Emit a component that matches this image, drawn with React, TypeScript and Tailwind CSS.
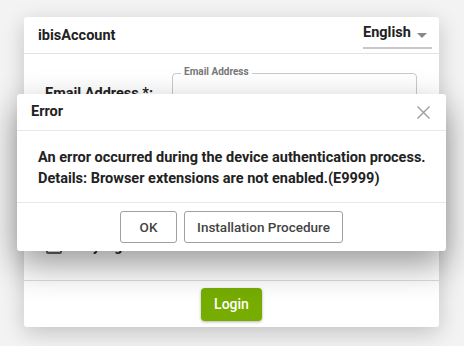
import React from "react";

export default function App() {
  return (
    <div
      className="relative w-[464px] h-[346px] overflow-hidden bg-[#f3f3f3] pt-[17px] pl-[24px]"
      style={{ fontFamily: "Roboto, 'Liberation Sans', sans-serif" }}
    >
      <div className="w-[415px] h-[310px] bg-white rounded-[3px] shadow-[0_6px_22px_rgba(0,0,0,0.2)] flex flex-col">
        <div className="h-[37px] border-b border-[#e3e3e3] flex items-center justify-between pl-[14px] pr-[7px] shrink-0">
          <div className="text-[14.5px] font-bold text-[#222] leading-none pt-[3px]">ibisAccount</div>
          <div className="self-end mb-[4px] h-[29px] w-[69px] border-b-2 border-[#c8c8c8] flex items-center justify-between">
            <span className="text-[14.5px] font-bold text-[#222] leading-none">English</span>
            <span className="w-0 h-0 border-l-[5px] border-r-[5px] border-t-[5px] border-l-transparent border-r-transparent border-t-[#888] mr-[5px] mt-[3px]"></span>
          </div>
        </div>
        <div className="flex-1 flex flex-col pl-[21px] pr-[22px] pt-[19px]">
          <div className="flex items-start">
            <div className="w-[127px] pt-[14px] text-[14.5px] font-bold text-[#222] leading-none">Email Address *:</div>
            <div className="relative flex-1 h-[40px] border border-[#c9c9c9] rounded-[4px]">
              <span className="absolute left-[8px] top-[-7px] bg-white px-[3px] text-[10px] font-bold text-[#777] leading-none">
                Email Address
              </span>
            </div>
          </div>
          <div className="flex items-start mt-[16px]">
            <div className="w-[127px]"></div>
            <div className="relative flex-1 h-[40px] border border-[#c9c9c9] rounded-[4px]"></div>
          </div>
          <div className="flex items-center mt-[69px] ml-[1px]">
            <div className="w-[16px] h-[16px] border-2 border-[#666] rounded-[2px]"></div>
            <span className="ml-[10px] text-[14px] font-bold text-[#222] leading-none">Stay signed in</span>
          </div>
        </div>
        <div className="h-[47px] border-t border-[#dcdcdc] flex items-center justify-center shrink-0">
          <button className="w-[61px] h-[33px] rounded-[4px] bg-[#76ad00] text-white text-[14px] font-medium shadow-[0_1px_3px_rgba(0,0,0,0.3)]">
            Login
          </button>
        </div>
      </div>

      <div className="absolute left-[17px] top-[94px] w-[429px] h-[157px] bg-white rounded-[3px] shadow-[0_14px_34px_rgba(0,0,0,0.4)] flex flex-col">
        <div className="h-[37px] border-b border-[#e8e8e8] flex items-center justify-between pl-[14px] pr-[16px] shrink-0">
          <span className="text-[14.5px] font-bold text-[#222] leading-none pt-[1px]">Error</span>
          <svg width="13" height="13" viewBox="0 0 13 13">
            <path d="M0.5 0.5 L12.5 12.5 M12.5 0.5 L0.5 12.5" stroke="#9a9a9a" strokeWidth="1.3" />
          </svg>
        </div>
        <div className="h-[72px] border-b border-[#e8e8e8] pl-[21px] pt-[16px] text-[14.5px] font-bold text-[#222] leading-[21px] shrink-0">
          <div>An error occurred during the device authentication process.</div>
          <div>Details: Browser extensions are not enabled.(E9999)</div>
        </div>
        <div className="flex-1 flex items-center justify-center gap-[7px]">
          <button className="w-[57px] h-[32px] border border-[#a0a0a0] rounded-[3px] text-[13.5px] text-[#444] font-medium">OK</button>
          <button className="w-[159px] h-[32px] border border-[#a0a0a0] rounded-[3px] text-[13.5px] text-[#444] font-medium">
            Installation Procedure
          </button>
        </div>
      </div>
    </div>
  );
}
